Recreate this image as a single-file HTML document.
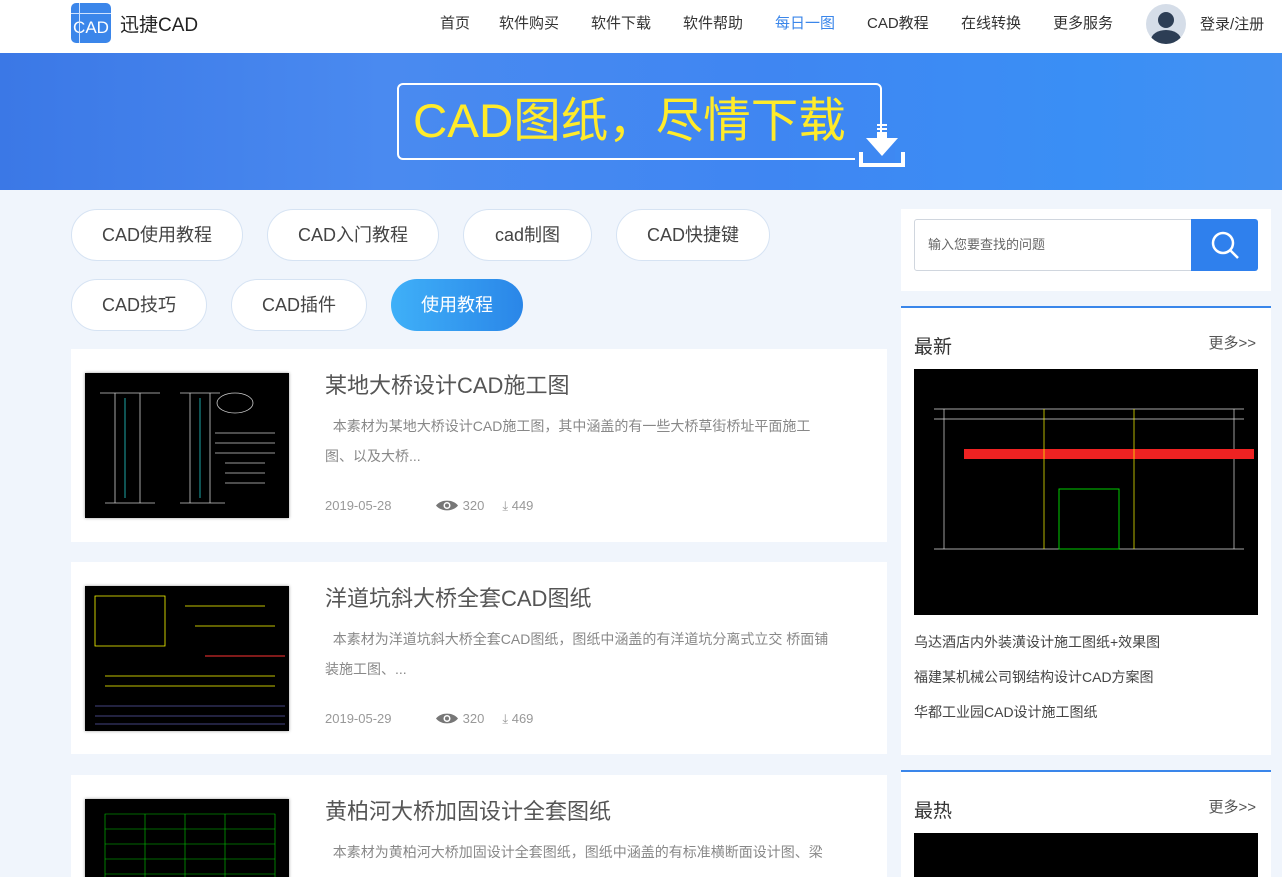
<!DOCTYPE html>
<html style="height:877px;overflow:hidden"><head><meta charset="utf-8"><style>
*{margin:0;padding:0;box-sizing:border-box}
body{width:1282px;height:877px;overflow:hidden;background:#f0f5fc;font-family:"Liberation Sans","Noto Sans CJK SC",sans-serif;color:#333;position:relative}
.hdr{position:absolute;left:0;top:0;width:1282px;height:53px;background:#fff}
.logo{position:absolute;left:71px;top:3px;width:40px;height:40px;border-radius:5px;background:#3b86ea;color:#fff;font-size:17px;text-align:center;line-height:50px;overflow:hidden}
.logo:before{content:"";position:absolute;left:8px;top:0;width:1px;height:40px;background:#cfe2ff}
.logo:after{content:"";position:absolute;left:0;top:10px;width:40px;height:1px;background:#cfe2ff}
.brand{position:absolute;left:120px;top:10px;font-size:19px;color:#222}
.nav{position:absolute;top:12px;font-size:15px;color:#333}
.avatar{position:absolute;left:1146px;top:4px;width:40px;height:40px;border-radius:50%;background:#d5dde8;overflow:hidden}
.banner{position:absolute;left:0;top:53px;width:1282px;height:137px;background:linear-gradient(90deg,#3b78e6,#4a8af0 30%,#3f86f2 60%,#3a8ff5 85%,#4390f2)}
.bbox{position:absolute;left:397px;top:83px;width:485px;height:77px;border:2px solid #fff;border-radius:6px}
.btxt{position:absolute;left:413px;top:91px;font-size:47.5px;color:#ffeb2a;line-height:62px;white-space:nowrap}
.pill{position:absolute;height:52px;border:1px solid #d6e3f3;border-radius:26px;background:#fff;font-size:18px;color:#444;text-align:center;line-height:50px}
.pill.on{background:linear-gradient(90deg,#3fb0f8,#2a86e8);color:#fff;border:none;line-height:52px}
.card{position:absolute;left:71px;width:816px;background:#fff;overflow:hidden}
.thumb{position:absolute;left:14px;top:24px;width:204px;height:145px;background:#000;box-shadow:0 0 3px #999}
.ct{position:absolute;left:254px;top:19px;font-size:22px;color:#555}
.cd{position:absolute;left:254px;top:62px;width:560px;font-size:14px;color:#888;line-height:30px;white-space:nowrap}
.meta{position:absolute;top:149px;font-size:13px;color:#999}
.side{position:absolute;left:901px;width:370px;background:#fff;overflow:hidden}
.st{position:absolute;left:13px;top:24px;font-size:19px;color:#333}
.sm{position:absolute;right:15px;top:24px;font-size:15px;color:#555}
.sl{position:absolute;left:13px;font-size:14px;color:#444}
</style></head><body>
<div class="hdr">
<div class="logo">CAD</div>
<div class="brand">迅捷CAD</div>
<div class="nav" style="left:440px">首页</div>
<div class="nav" style="left:499px">软件购买</div>
<div class="nav" style="left:591px">软件下载</div>
<div class="nav" style="left:683px">软件帮助</div>
<div class="nav" style="left:775px;color:#3a86ea">每日一图</div>
<div class="nav" style="left:867px">CAD教程</div>
<div class="nav" style="left:961px">在线转换</div>
<div class="nav" style="left:1053px">更多服务</div>
<div class="avatar"><div style="position:absolute;left:12px;top:8px;width:16px;height:16px;border-radius:50%;background:#2d3e55"></div><div style="position:absolute;left:5px;top:26px;width:30px;height:20px;border-radius:50% 50% 0 0;background:#2d3e55"></div></div>
<div class="nav" style="left:1200px;font-size:15px;top:13px">登录/注册</div>
</div>
<div class="banner"></div>
<div class="bbox"></div>
<div style="position:absolute;left:855px;top:140px;width:40px;height:30px;background:#3e88f2"></div>
<svg style="position:absolute;left:858px;top:122px" width="48" height="46"><rect x="19" y="2" width="10" height="2" fill="#fff"/><rect x="19" y="6" width="10" height="2" fill="#fff"/><rect x="19" y="10" width="10" height="6" fill="#fff"/><path d="M8 16H40L24 34Z" fill="#fff"/><path d="M3 30V43H45V30" stroke="#fff" stroke-width="4" fill="none"/></svg>
<div class="btxt">CAD图纸，尽情下载</div>

<div class="pill" style="left:71px;top:209px;width:172px">CAD使用教程</div>
<div class="pill" style="left:267px;top:209px;width:172px">CAD入门教程</div>
<div class="pill" style="left:463px;top:209px;width:129px">cad制图</div>
<div class="pill" style="left:616px;top:209px;width:154px">CAD快捷键</div>
<div class="pill" style="left:71px;top:279px;width:136px">CAD技巧</div>
<div class="pill" style="left:231px;top:279px;width:136px">CAD插件</div>
<div class="pill on" style="left:391px;top:279px;width:132px">使用教程</div>

<div class="card" style="top:349px;height:193px">
<div class="thumb"><svg width="204" height="145"><g stroke="#ccc" fill="none" stroke-width=".8"><path d="M15 20h60M30 20v110M55 20v110M20 130h50M95 20h40M105 20v110M125 20v110M95 130h45"/><ellipse cx="150" cy="30" rx="18" ry="10"/><path d="M130 60h60M130 70h60M130 80h60M140 90h40M140 100h40M140 110h40"/></g><path d="M40 25v100M115 25v100" stroke="#2cc" stroke-width=".8"/></svg></div>
<div class="ct">某地大桥设计CAD施工图</div>
<div class="cd">&nbsp;&nbsp;本素材为某地大桥设计CAD施工图，其中涵盖的有一些大桥草街桥址平面施工<br>图、以及大桥...</div>
<div class="meta" style="left:254px">2019-05-28</div>
<div class="meta" style="left:364px"><svg width="24" height="13" style="vertical-align:-2px"><path d="M1 6.5C6 0 18 0 23 6.5C18 13 6 13 1 6.5Z" fill="#777"/><circle cx="12" cy="6.5" r="3.5" fill="#fff"/><circle cx="12" cy="6.5" r="2" fill="#777"/></svg> 320 &nbsp;&nbsp;&nbsp; ⤓ 449</div>
</div>
<div class="card" style="top:562px;height:192px">
<div class="thumb"><svg width="204" height="145"><g stroke="#ff0" fill="none" stroke-width=".8"><path d="M10 10h70v50H10zM100 20h80M110 40h80M20 90h170M20 100h170"/></g><path d="M120 70h80" stroke="#f33"/><path d="M10 120h190M10 130h190M10 138h190" stroke="#88f" stroke-width=".6"/></svg></div>
<div class="ct">洋道坑斜大桥全套CAD图纸</div>
<div class="cd">&nbsp;&nbsp;本素材为洋道坑斜大桥全套CAD图纸，图纸中涵盖的有洋道坑分离式立交 桥面铺<br>装施工图、...</div>
<div class="meta" style="left:254px">2019-05-29</div>
<div class="meta" style="left:364px"><svg width="24" height="13" style="vertical-align:-2px"><path d="M1 6.5C6 0 18 0 23 6.5C18 13 6 13 1 6.5Z" fill="#777"/><circle cx="12" cy="6.5" r="3.5" fill="#fff"/><circle cx="12" cy="6.5" r="2" fill="#777"/></svg> 320 &nbsp;&nbsp;&nbsp; ⤓ 469</div>
</div>
<div class="card" style="top:775px;height:102px">
<div class="thumb"><svg width="204" height="145"><g stroke="#0c0" fill="none" stroke-width=".6"><path d="M20 15h170v130H20zM20 30h170M20 45h170M20 60h170M20 75h170M60 15v130M100 15v130M140 15v130"/></g></svg></div>
<div class="ct">黄柏河大桥加固设计全套图纸</div>
<div class="cd">&nbsp;&nbsp;本素材为黄柏河大桥加固设计全套图纸，图纸中涵盖的有标准横断面设计图、梁</div>
</div>

<div class="side" style="top:209px;height:82px">
<div style="position:absolute;left:13px;top:10px;width:278px;height:52px;border:1px solid #d0d6de;border-radius:3px 0 0 3px;font-size:13px;color:#666;line-height:50px;padding-left:13px">输入您要查找的问题</div>
<div style="position:absolute;left:290px;top:10px;width:67px;height:52px;background:#2f80ed;border-radius:0 3px 3px 0"><svg width="67" height="52"><circle cx="32" cy="24" r="10" stroke="#fff" stroke-width="2.5" fill="none"/><path d="M39 31l8 8" stroke="#fff" stroke-width="2.5"/></svg></div>
</div>
<div class="side" style="top:306px;height:449px;border-top:2px solid #3a86ea">
<div class="st">最新</div><div class="sm">更多&gt;&gt;</div>
<div style="position:absolute;left:13px;top:61px;width:344px;height:246px;background:#000"><svg width="344" height="246"><g stroke="#ddd" fill="none" stroke-width=".7"><path d="M20 40h310M20 50h310M30 40v140M320 40v140M20 180h310"/></g><path d="M50 85h290" stroke="#e22" stroke-width="10"/><rect x="145" y="120" width="60" height="60" stroke="#0c0" fill="none"/><path d="M130 40v140M220 40v140" stroke="#ff0" stroke-width=".7"/></svg></div>
<div class="sl" style="top:324px">乌达酒店内外装潢设计施工图纸+效果图</div>
<div class="sl" style="top:359px">福建某机械公司钢结构设计CAD方案图</div>
<div class="sl" style="top:394px">华都工业园CAD设计施工图纸</div>
</div>
<div class="side" style="top:770px;height:107px;border-top:2px solid #3a86ea">
<div class="st">最热</div><div class="sm">更多&gt;&gt;</div>
<div style="position:absolute;left:13px;top:61px;width:344px;height:46px;background:#000"></div>
</div>
</body></html>
